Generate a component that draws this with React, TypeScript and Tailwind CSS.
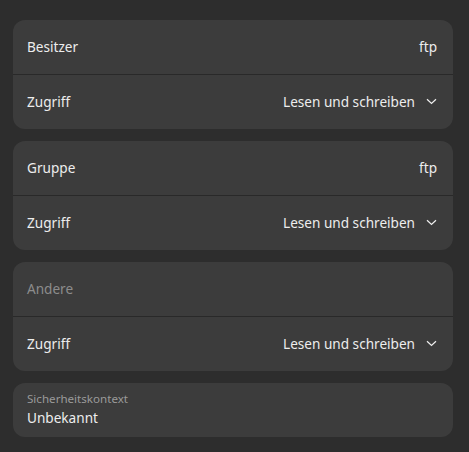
function Chevron() {
  return (
    <svg className="ml-[11px]" width="11" height="7" viewBox="0 0 11 7" fill="none">
      <path d="M1 1.2 L5.5 5.5 L10 1.2" stroke="#ededed" strokeWidth="1.2" />
    </svg>
  );
}

function Row({
  label,
  value,
  dim,
  dropdown,
}: {
  label: string;
  value?: string;
  dim?: boolean;
  dropdown?: boolean;
}) {
  return (
    <div className="flex h-[54px] items-center justify-between pl-[14px] pr-[16px]">
      <span className={dim ? "text-[#8c8c8c]" : "text-[#ededed]"}>{label}</span>
      {value ? (
        <span className="flex items-center text-[#ededed]">
          {value}
          {dropdown ? <Chevron /> : null}
        </span>
      ) : null}
    </div>
  );
}

function Card({ children }: { children: React.ReactNode }) {
  return <div className="overflow-hidden rounded-[12px] bg-[#3c3c3c]">{children}</div>;
}

export default function App() {
  return (
    <div
      className="flex h-[452px] w-[469px] flex-col gap-[12px] bg-[#2d2d2d] pl-[13px] pr-[16px] pt-[20px] text-[13.6px]"
      style={{ fontFamily: '"Noto Sans", "Open Sans", sans-serif' }}
    >
      <Card>
        <Row label="Besitzer" value="ftp" />
        <div className="h-px bg-[#292929]" />
        <Row label="Zugriff" value="Lesen und schreiben" dropdown />
      </Card>
      <Card>
        <Row label="Gruppe" value="ftp" />
        <div className="h-px bg-[#292929]" />
        <Row label="Zugriff" value="Lesen und schreiben" dropdown />
      </Card>
      <Card>
        <Row label="Andere" dim />
        <div className="h-px bg-[#292929]" />
        <Row label="Zugriff" value="Lesen und schreiben" dropdown />
      </Card>
      <div className="flex h-[54px] flex-col rounded-[12px] bg-[#3c3c3c] pl-[14px] pt-[8px]">
        <span className="mb-[2px] text-[11.6px] leading-[15px] text-[#9a9a9a]">Sicherheitskontext</span>
        <span className="leading-[20px] text-[#ededed]">Unbekannt</span>
      </div>
    </div>
  );
}
